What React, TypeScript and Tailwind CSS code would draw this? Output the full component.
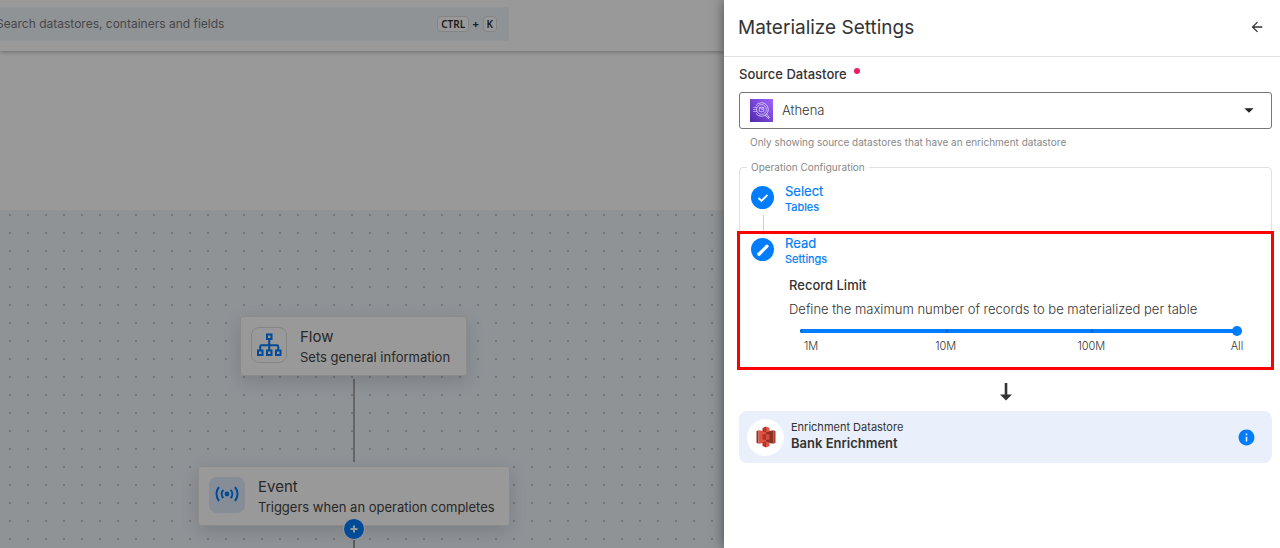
import { useState } from "react";
import type { ReactNode } from "react";
import { MdArrowBack, MdArrowDropDown, MdInfo } from "react-icons/md";

function FlowIcon() {
  return (
    <svg viewBox="0 0 26 24" className="h-6 w-[26px]" fill="none" stroke="#007dfc" strokeWidth="2" aria-hidden="true">
      <path d="M11 1.500h4.500v4.500h-4.500z M2 17.500h4.500v4.500h-4.500z M11 17.500h4.500v4.500h-4.500z M20 17.500h4.500v4.500h-4.500z" />
      <path d="M13.250 6v11.500 M4.250 17.500v-4q0-1.200 1.200-1.200h15.600q1.200 0 1.200 1.200v4" />
    </svg>
  );
}

function EventIcon() {
  return (
    <svg viewBox="0 0 24 24" className="size-6" fill="none" stroke="#007dfc" strokeWidth="2" aria-hidden="true">
      <circle cx="12" cy="11" r="2.400" fill="#007dfc" stroke="none" />
      <path d="M8.300 6.800a6.500 6.500 0 0 0 0 8.400 M15.700 6.800a6.500 6.500 0 0 1 0 8.400 M4 4a11 11 0 0 0 0 14 M20 4a11 11 0 0 1 0 14" />
    </svg>
  );
}

function CheckIcon() {
  return (
    <svg viewBox="0 0 14 14" className="size-[14px]" fill="none" stroke="#fff" strokeWidth="2" aria-hidden="true">
      <path d="M2.500 7l3 2.900 6-6" />
    </svg>
  );
}

function PencilIcon() {
  return (
    <svg viewBox="0 0 14 14" className="size-[14px]" fill="none" stroke="#fff" strokeWidth="3.200" aria-hidden="true">
      <path d="M3.200 11L11 3.200" strokeLinecap="round" />
      <path d="M1.500 12.600v-3l3 3z" fill="#fff" stroke="none" />
    </svg>
  );
}

function AthenaIcon() {
  return (
    <svg viewBox="0 0 23 23" className="size-[23px] shrink-0" fill="none" stroke="#e6dcff" aria-hidden="true">
      <defs>
        <linearGradient id="athena" x1="0" y1="1" x2="1" y2="0">
          <stop offset="0" stopColor="#4d27aa" />
          <stop offset="1" stopColor="#a166ff" />
        </linearGradient>
      </defs>
      <path d="M0 0h23v23H0z" fill="url(#athena)" stroke="none" />
      <circle cx="11.500" cy="10.500" r="6.800" strokeWidth=".8" strokeDasharray="35 8" strokeDashoffset="18" />
      <circle cx="11.500" cy="10.500" r="4.900" strokeWidth=".7" />
      <path d="M9.300 8.700v3.600q2.200 1.200 4.400 0V8.700q-2.200-1.200-4.400 0q2.200 1.200 4.400 0 M11.500 10.600h1.500" strokeWidth=".7" />
      <path d="M3.200 8.500h4 M3 10.500h3.600 M3.200 12.500h4" strokeWidth=".6" />
      <path d="M15 15.800l3 3.400q1.300.6 1.300-1l-3-3.300" strokeWidth=".9" />
    </svg>
  );
}

function BucketIcon() {
  return (
    <svg viewBox="0 0 22 24" className="h-6 w-[22px]" aria-hidden="true">
      <path d="M1.500 6.200l2-1v13.600l-2-1z" fill="#8c3123" />
      <path d="M3.500 5.200l7.500 1.200v11.200l-7.500 1.200z" fill="#e05243" />
      <path d="M20.500 6.200l-2-1v13.600l2-1z" fill="#a83a2e" />
      <path d="M18.500 5.200l-7.500 1.200v11.200l7.500 1.200z" fill="#8c3123" />
      <path d="M7.500 3L11 1.500v6l-3.500-1z M7.500 21L11 22.500v-6l-3.500 1z" fill="#b0342a" />
      <path d="M14.500 3L11 1.500v6l3.500-1z M14.500 21L11 22.500v-6l3.500 1z" fill="#e05243" />
      <path d="M7.500 9.500l3.500-.5v6l-3.500-.5z" fill="#b0342a" />
      <path d="M14.500 9.500L11 9v6l3.500-.5z" fill="#d84a3c" />
    </svg>
  );
}

function Key({ children }: { children: ReactNode }) {
  return (
    <kbd className="rounded border border-[#dedede] bg-white px-[3px] font-['Noto_Sans',sans-serif] text-[10px] leading-[14px] font-semibold text-[#303030]">
      {children}
    </kbd>
  );
}

function NodeCard({ icon, title, text, tinted }: { icon: ReactNode; title: string; text: string; tinted?: boolean }) {
  return (
    <div className="flex h-[60px] w-full items-center gap-[13px] rounded-[3px] border border-[#e8e8e8] bg-white px-[10px] pb-[2px] shadow-[0_5px_18px_rgba(0,0,0,0.14)]">
      <div className={tinted ? "flex size-9 items-center justify-center rounded-lg bg-[#dfecfa]" : "flex size-9 items-center justify-center rounded-lg border border-[#dcdcdc]"}>
        {icon}
      </div>
      <div className="pt-1 whitespace-nowrap text-[#444]">
        <div className="text-[15px] leading-5">{title}</div>
        <div className="text-[13px] leading-5">{text}</div>
      </div>
    </div>
  );
}

function Step({ icon, title, text }: { icon: ReactNode; title: string; text: string }) {
  return (
    <div className="flex items-start gap-[11px] text-[#007dfc]">
      <div className="mt-[3px] flex size-[23px] items-center justify-center rounded-full bg-[#007dfc]">{icon}</div>
      <div className="[-webkit-text-stroke:0.2px]">
        <div className="text-[13px] leading-4">{title}</div>
        <div className="text-[11px] leading-4">{text}</div>
      </div>
    </div>
  );
}

function Workspace() {
  return (
    <main className="relative flex min-w-0 flex-1 flex-col overflow-hidden bg-white">
      <header className="z-10 flex h-[51px] items-start pt-[7px] shadow-[0_1px_4px_rgba(0,0,0,0.3)]">
        <label className="-ml-4 flex h-[34px] w-[525px] items-center rounded bg-[#eef5fb] pr-3 pl-3">
          <input
            aria-label="Search"
            placeholder="Search datastores, containers and fields"
            className="min-w-0 flex-1 text-[12px] text-[#333] outline-none placeholder:text-[#777]"
          />
          <span className="flex items-center gap-[3px] text-[11px] font-semibold text-[#333]">
            <Key>CTRL</Key>+<Key>K</Key>
          </span>
        </label>
      </header>
      <div className="h-[159px]" />
      <section className="relative flex-1 bg-[#eef5fb] bg-[radial-gradient(circle_at_10px_5px,#a0a6ab_0.5px,transparent_1px)] bg-size-[18px_18px]">
        <div className="absolute top-[169px] left-[353px] h-[83px] w-[2px] bg-[#aaa]" />
        <div className="absolute top-[316px] left-[353px] h-[22px] w-[2px] bg-[#999]" />
        <div className="absolute top-[106px] left-[240px] w-[227px]">
          <NodeCard icon={<FlowIcon />} title="Flow" text="Sets general information" />
        </div>
        <div className="absolute top-[256px] left-[198px] w-[312px]">
          <NodeCard icon={<EventIcon />} title="Event" text="Triggers when an operation completes" tinted />
        </div>
        <button aria-label="Add step" className="absolute top-[308px] left-[343px] flex size-[22px] items-center justify-center rounded-full border border-white bg-[#007dfc]">
          <svg viewBox="0 0 8 8" className="size-2" stroke="#fff" strokeWidth="2" aria-hidden="true">
            <path d="M4 .5v7M.5 4h7" />
          </svg>
        </button>
      </section>
      <div className="absolute inset-0 z-20 bg-black/40" />
    </main>
  );
}

function RecordLimit() {
  const [value, setValue] = useState(3);
  return (
    <div className="pl-[38px] text-[#333]">
      <label htmlFor="limit" className="block text-[13px] leading-6 font-medium">
        Record Limit
      </label>
      <p className="text-[13px] leading-6 font-light">Define the maximum number of records to be materialized per table</p>
      <div className="mr-[23px] ml-[11px]">
        <div className="relative -mr-[5px] flex h-5 items-center">
          <input
            id="limit"
            type="range"
            min={0}
            max={3}
            value={value}
            onChange={(e) => setValue(Number(e.target.value))}
            className="h-1 w-full appearance-none rounded-sm bg-[linear-gradient(to_right,#007dfc_calc(100%-5px),transparent_0)] [&::-webkit-slider-thumb]:size-[10px] [&::-webkit-slider-thumb]:appearance-none [&::-webkit-slider-thumb]:rounded-full [&::-webkit-slider-thumb]:bg-[#007dfc]"
          />
          <div className="pointer-events-none absolute inset-x-0 flex justify-between pr-[5px]">
            <i className="h-1 w-[2px] rounded-l-sm bg-[#0766c6]" />
            <i className="h-1 w-[2px] bg-[#0766c6]" />
            <i className="h-1 w-[2px] bg-[#0766c6]" />
            <i className="h-1 w-0" />
          </div>
        </div>
        <div className="flex justify-between text-[11px] leading-[11px] font-light whitespace-nowrap">
          <span className="w-0">
            <span className="ml-1">1M</span>
          </span>
          <span className="flex w-0 justify-center">10M</span>
          <span className="flex w-0 justify-center">100M</span>
          <span className="flex w-0 justify-center">All</span>
        </div>
      </div>
    </div>
  );
}

function SettingsPanel() {
  return (
    <aside className="z-30 w-[556px] shrink-0 bg-white shadow-[0_0_12px_rgba(0,0,0,0.5)]">
      <header className="flex h-[57px] items-center justify-between border-b border-[#e0e0e0] pr-[15px] pb-[2px] pl-[14px]">
        <h1 className="pt-[2px] text-[19px] text-[#333]">Materialize Settings</h1>
        <button aria-label="Back">
          <MdArrowBack className="size-4 text-[#333]" />
        </button>
      </header>
      <div className="pr-2 pl-[15px]">
        <label htmlFor="source" className="flex h-[35px] items-center gap-[7px] text-[13px] font-medium text-[#333]">
          Source Datastore
          <span className="mb-2 size-[6px] rounded-full bg-[#ee1b64]" />
        </label>
        <div className="flex h-[37px] items-center gap-[9px] rounded-[3px] border border-[#777] pr-[11px] pl-[10px]">
          <AthenaIcon />
          <select id="source" className="min-w-0 flex-1 appearance-none text-[13px] font-light text-[#333] outline-none">
            <option>Athena</option>
          </select>
          <MdArrowDropDown className="pointer-events-none mb-px size-[22px] text-[#222]" />
        </div>
        <p className="pt-[5px] pl-[11px] text-[10px] leading-4 text-[#888]">
          Only showing source datastores that have an enrichment datastore
        </p>
        <fieldset className="relative mt-[9px] rounded border border-[#e0e0e0] px-[11px] pb-4">
          <legend className="-ml-1 px-1 text-[10px] leading-4 text-[#888]">Operation Configuration</legend>
          <div className="pt-2">
            <Step icon={<CheckIcon />} title="Select" text="Tables" />
          </div>
          <div className="ml-3 h-5 w-px bg-[#d0d0d0]" />
          <Step icon={<PencilIcon />} title="Read" text="Settings" />
          <div className="pt-[6px]">
            <RecordLimit />
          </div>
          <div className="pointer-events-none absolute -inset-x-[3px] top-[56px] -bottom-[2px] border-[3px] border-[#ff0000]" />
        </fieldset>
        <div className="flex h-[42px] items-center justify-center pt-[3px]">
          <svg viewBox="0 0 12 18" className="h-[18px] w-3" aria-hidden="true">
            <path d="M4.700 0h2.600v11.500h4.700L6 17.500 0 11.500h4.700z" fill="#333" />
          </svg>
        </div>
        <div className="flex h-[52px] items-center gap-[7px] rounded-lg bg-[#e9effb] pr-4 pl-2">
          <div className="flex size-[37px] items-center justify-center rounded-full bg-white">
            <BucketIcon />
          </div>
          <div className="flex-1 pb-1 text-[#333]">
            <div className="text-[11px] leading-4">Enrichment Datastore</div>
            <div className="text-[13px] leading-4 font-semibold">Bank Enrichment</div>
          </div>
          <button aria-label="More information">
            <MdInfo className="size-[19px] text-[#007dfc]" />
          </button>
        </div>
      </div>
    </aside>
  );
}

export default function App() {
  return (
    <div className="flex min-h-screen overflow-hidden font-[Inter,sans-serif]">
      <Workspace />
      <SettingsPanel />
    </div>
  );
}
